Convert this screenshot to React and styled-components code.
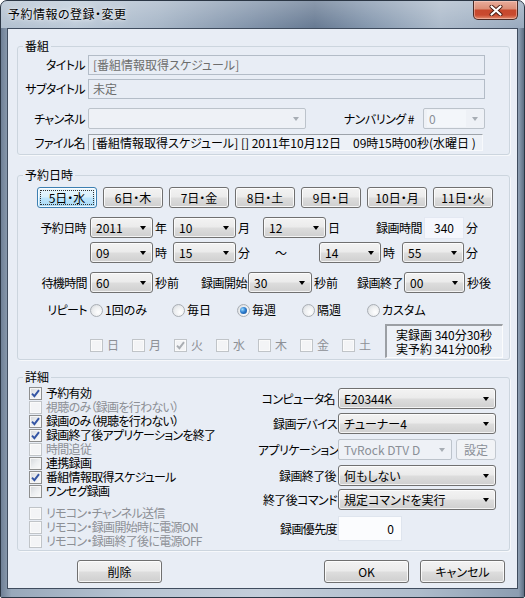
import React from 'react';
import styled, { createGlobalStyle } from 'styled-components';

const GlobalStyle = createGlobalStyle`
  html, body { margin: 0; padding: 0; background: #ffffff; }
  body {
    font-family: "Noto Sans CJK JP", "Noto Sans", sans-serif;
    font-size: 12px;
    line-height: 14px;
    font-feature-settings: "palt" 1;
    color: #000;
  }
  * { box-sizing: border-box; }
`;

const dayButtons = ['5日・水', '6日・木', '7日・金', '8日・土', '9日・日', '10日・月', '11日・火'];
const repeats = [
  { text: '1回のみ', w: 82 },
  { text: '毎日', w: 65 },
  { text: '毎週', w: 65, checked: true },
  { text: '隔週', w: 65 },
  { text: 'カスタム', w: 65 },
];
const weekDays = [
  { text: '日' },
  { text: '月' },
  { text: '火', checked: true },
  { text: '水' },
  { text: '木' },
  { text: '金' },
  { text: '土' },
];
const details = [
  { text: '予約有効', checked: true },
  { text: '視聴のみ（録画を行わない）', disabled: true },
  { text: '録画のみ（視聴を行わない）', checked: true },
  { text: '録画終了後アプリケーションを終了', checked: true },
  { text: '時間追従', disabled: true },
  { text: '連携録画' },
  { text: '番組情報取得スケジュール', checked: true },
  { text: 'ワンセグ録画' },
];
const remocon = ['リモコン・チャンネル送信', 'リモコン・録画開始時に電源ON', 'リモコン・録画終了後に電源OFF'];

function Check({ checked, disabled }) {
  return (
    <CheckBox $disabled={disabled}>
      {checked && (
        <svg width="9" height="9" viewBox="0 0 9 9">
          <path
            d="M1 4.6 L3.4 7.2 L8 1.2"
            fill="none"
            stroke={disabled ? '#a9adb2' : '#3455a4'}
            strokeWidth="1.9"
          />
        </svg>
      )}
    </CheckBox>
  );
}

function Combo({ value, w, disabled, field }) {
  return (
    <ComboBox $w={w} $disabled={disabled}>
      <ComboText $disabled={disabled} $field={field}>{value}</ComboText>
      <Arrow $disabled={disabled} />
    </ComboBox>
  );
}

const App = () => {
  return (
    <>
      <GlobalStyle />
      <Window>
        <TitleBar>
          <Title>予約情報の登録・変更</Title>
          <CloseButton>
            <svg width="14" height="11" viewBox="0 0 14 11">
              <path d="M2.5 1.5 L11.5 9.5 M11.5 1.5 L2.5 9.5" stroke="#4a1c12" strokeWidth="4" strokeLinecap="round" />
              <path d="M2.5 1.5 L11.5 9.5 M11.5 1.5 L2.5 9.5" stroke="#ffffff" strokeWidth="2.2" strokeLinecap="round" />
            </svg>
          </CloseButton>
        </TitleBar>
        <Frame>
          <Client>
            <Group $mt={10} $pb={3}>
              <Legend>番組</Legend>
              <Row $mt={2} $h={20}>
                <FieldLabel $w={70}>タイトル</FieldLabel>
                <TextBox $w={397}>[番組情報取得スケジュール]</TextBox>
              </Row>
              <Row $mt={4} $h={20}>
                <FieldLabel $w={70}>サブタイトル</FieldLabel>
                <TextBox $w={397}>未定</TextBox>
              </Row>
              <Row $mt={9}>
                <FieldLabel $w={70}>チャンネル</FieldLabel>
                <Combo w={218} value="" disabled />
                <SubLabel $w={117} $pr={9}>ナンバリング #</SubLabel>
                <Combo w={62} value="0" disabled field />
              </Row>
              <Row $mt={5} $h={17}>
                <FieldLabel $w={70}>ファイル名</FieldLabel>
                <FileBox>[番組情報取得スケジュール] [] 2011年10月12日　09時15時00秒(水曜日 )</FileBox>
              </Row>
            </Group>

            <Group $mt={13} $pb={1}>
              <Legend>予約日時</Legend>
              <DayRow>
                {dayButtons.map((d, i) => (
                  <DayButton key={d} $focused={i === 0}>{d}</DayButton>
                ))}
              </DayRow>
              <Row $mt={9}>
                <FieldLabel $w={72} $pr={4}>予約日時</FieldLabel>
                <Combo w={63} value="2011" />
                <Unit $w={20}>年</Unit>
                <Combo w={63} value="10" />
                <Unit $w={27}>月</Unit>
                <Combo w={63} value="12" />
                <Unit $w={14}>日</Unit>
                <SubLabel $w={84} $pr={2}>録画時間</SubLabel>
                <NumBox $w={40} $h={22} $pr={9}>340</NumBox>
                <Unit>分</Unit>
              </Row>
              <Row $mt={4}>
                <FieldLabel $w={72} />
                <Combo w={63} value="09" />
                <Unit $w={20}>時</Unit>
                <Combo w={63} value="15" />
                <Unit $w={27}>分</Unit>
                <Tilde>～</Tilde>
                <Combo w={62} value="14" />
                <Unit $w={21}>時</Unit>
                <Combo w={62} value="55" />
                <Unit>分</Unit>
              </Row>
              <Row $mt={9}>
                <FieldLabel $w={72}>待機時間</FieldLabel>
                <Combo w={63} value="60" />
                <Unit $w={30}>秒前</Unit>
                <SubLabel $w={65} $pr={1}>録画開始</SubLabel>
                <Combo w={64} value="30" />
                <Unit $w={30}>秒前</Unit>
                <SubLabel $w={62} $pr={1}>録画終了</SubLabel>
                <Combo w={61} value="00" />
                <Unit>秒後</Unit>
              </Row>
              <Row $mt={10} $h={14}>
                <FieldLabel $w={72}>リピート</FieldLabel>
                {repeats.map(r => (
                  <Option key={r.text} $w={r.w}>
                    <RadioDot $checked={r.checked} />
                    <span>{r.text}</span>
                  </Option>
                ))}
              </Row>
              <Row $mt={7} $h={34} $align="flex-start">
                <FieldLabel $w={72} />
                <WeekDays>
                  {weekDays.map(d => (
                    <DayCheck key={d.text}>
                      <Check checked={d.checked} disabled />
                      <span>{d.text}</span>
                    </DayCheck>
                  ))}
                </WeekDays>
                <ResultBox>
                  <ResultLine>実録画 340分30秒</ResultLine>
                  <ResultLine>実予約 341分00秒</ResultLine>
                </ResultBox>
              </Row>
            </Group>

            <Group $mt={10} $pb={2}>
              <Legend>詳細</Legend>
              <DetailColumns>
                <CheckColumn>
                  {details.map(d => (
                    <CheckRow key={d.text} $disabled={d.disabled}>
                      <Check checked={d.checked} disabled={d.disabled} />
                      <CheckText>{d.text}</CheckText>
                    </CheckRow>
                  ))}
                  <CheckGap />
                  {remocon.map(t => (
                    <CheckRow key={t} $disabled>
                      <Check disabled />
                      <CheckText>{t}</CheckText>
                    </CheckRow>
                  ))}
                </CheckColumn>
                <SettingColumn>
                  <Row $mt={4}>
                    <FieldLabel $w={80} $pr={3}>コンピュータ名</FieldLabel>
                    <Combo w={158} value="E20344K" />
                  </Row>
                  <Row $mt={4}>
                    <FieldLabel $w={80} $pr={1}>録画デバイス</FieldLabel>
                    <Combo w={158} value="チューナー4" />
                  </Row>
                  <Row $mt={5}>
                    <FieldLabel $w={80} $pr={0}>アプリケーション</FieldLabel>
                    <Combo w={114} value="TvRock DTV D" disabled />
                    <SmallButton>設定</SmallButton>
                  </Row>
                  <Row $mt={5}>
                    <FieldLabel $w={80} $pr={2}>録画終了後</FieldLabel>
                    <Combo w={158} value="何もしない" />
                  </Row>
                  <Row $mt={3}>
                    <FieldLabel $w={80} $pr={1}>終了後コマンド</FieldLabel>
                    <Combo w={158} value="規定コマンドを実行" />
                  </Row>
                  <Row $mt={6} $h={25}>
                    <FieldLabel $w={80} $pr={1}>録画優先度</FieldLabel>
                    <NumBox $w={64} $h={25} $pr={7} $white>0</NumBox>
                  </Row>
                </SettingColumn>
              </DetailColumns>
            </Group>

            <ButtonBar>
              <PushButton>削除</PushButton>
              <Spacer />
              <PushButton>OK</PushButton>
              <PushButton $ml={11}>キャンセル</PushButton>
            </ButtonBar>
          </Client>
        </Frame>
      </Window>
    </>
  );
};

const Window = styled.div`
  width: 525px;
  height: 598px;
  border: 1px solid #2b3644;
  border-radius: 7px 7px 2px 2px;
  overflow: hidden;
  display: flex;
  flex-direction: column;
  background: linear-gradient(
    90deg,
    #aebdcd 0%,
    #b9c7d6 14%,
    #a3b3c5 30%,
    #7a8da5 48%,
    #5f738d 60%,
    #7d91a9 70%,
    #a8b7c8 84%,
    #93a5ba 100%
  );
`;

const TitleBar = styled.div`
  height: 27px;
  flex: none;
  display: flex;
  align-items: flex-start;
  padding-left: 7px;
  background: linear-gradient(rgba(255, 255, 255, 0.28), rgba(255, 255, 255, 0.05));
`;

const Title = styled.div`
  margin-top: 6px;
  font-size: 12px;
  line-height: 14px;
  letter-spacing: 0.5px;
  color: #000;
  text-shadow: 0 0 6px rgba(255, 255, 255, 0.9), 0 0 2px rgba(255, 255, 255, 0.7);
`;

const CloseButton = styled.div`
  margin-left: auto;
  margin-right: 6px;
  width: 45px;
  height: 19px;
  display: flex;
  align-items: center;
  justify-content: center;
  border: 1px solid #4b2a24;
  border-top: none;
  border-radius: 0 0 5px 5px;
  background: linear-gradient(#e9ad9c 0%, #dc8f78 42%, #c7482c 52%, #c94a2f 78%, #e28d6f 100%);
  box-shadow: inset 0 0 0 1px rgba(255, 220, 210, 0.45);
`;

const Frame = styled.div`
  flex: 1;
  display: flex;
  padding: 0 6px 8px;
  background: linear-gradient(
    90deg,
    #6f8096 0%,
    #98a8ba 2%,
    #b7c4d2 25%,
    #c4ceda 50%,
    #aebccb 80%,
    #8c9db1 99%,
    #5f6f83 100%
  );
`;

const Client = styled.div`
  flex: 1;
  border: 1px solid #3f4c5e;
  background: #e8edf5;
  display: flex;
  flex-direction: column;
`;

const Group = styled.fieldset`
  margin: ${p => p.$mt}px 0 0 9px;
  width: 493px;
  min-width: 0;
  padding: 0 0 ${p => p.$pb}px 0;
  border: 1px solid #ccd5de;
  border-radius: 3px;
  box-shadow: 1px 1px 0 #f6f8fb;
`;

const Legend = styled.legend`
  margin-left: 5px;
  padding: 0 2px;
  line-height: 14px;
  height: 14px;
`;

const Row = styled.div`
  display: flex;
  align-items: ${p => p.$align || 'center'};
  height: ${p => p.$h || 21}px;
  margin-top: ${p => p.$mt || 0}px;
`;

const FieldLabel = styled.div`
  flex: none;
  width: ${p => p.$w}px;
  padding-right: ${p => (p.$pr === undefined ? 3 : p.$pr)}px;
  text-align: right;
  white-space: nowrap;
  letter-spacing: -0.6px;
`;

const SubLabel = styled.div`
  flex: none;
  width: ${p => p.$w}px;
  padding-right: ${p => p.$pr}px;
  text-align: right;
  white-space: nowrap;
  letter-spacing: -0.5px;
`;

const Unit = styled.div`
  flex: none;
  width: ${p => (p.$w ? `${p.$w}px` : 'auto')};
  padding-left: 2px;
  white-space: nowrap;
`;

const Tilde = styled.div`
  flex: none;
  width: 56px;
  padding-left: 12px;
`;

const TextBox = styled.div`
  width: ${p => p.$w}px;
  height: 20px;
  border: 1px solid #b3bcc7;
  padding: 2px 4px 0;
  color: #6d6d6d;
  white-space: nowrap;
`;

const FileBox = styled.div`
  width: 395px;
  height: 17px;
  padding: 1px 3px 0;
  border-top: 1px solid #9da3aa;
  border-left: 1px solid #9da3aa;
  border-right: 1px solid #f7f9fc;
  border-bottom: 1px solid #f7f9fc;
  background: #edf1f7;
  white-space: pre;
  overflow: hidden;
`;

const ComboBox = styled.div`
  flex: none;
  width: ${p => p.$w}px;
  height: 21px;
  display: flex;
  align-items: center;
  padding: 0 6px 0 3px;
  border: 1px solid ${p => (p.$disabled ? '#bcc3cb' : '#707070')};
  border-radius: ${p => (p.$disabled ? '2px' : '3px')};
  background: ${p =>
    p.$disabled
      ? '#eef1f6'
      : 'linear-gradient(#f3f3f3 0%, #ebebeb 48%, #dddddd 52%, #cfcfcf 100%)'};
  box-shadow: ${p => (p.$disabled ? 'none' : 'inset 0 0 0 1px rgba(255, 255, 255, 0.75)')};
`;

const ComboText = styled.div`
  flex: 1;
  height: 17px;
  padding: 2px 0 0 2px;
  margin-right: 6px;
  white-space: nowrap;
  overflow: hidden;
  color: ${p => (p.$disabled ? '#8a8f96' : '#000')};
  background: ${p => (p.$field ? '#f3f6fa' : 'transparent')};
`;

const Arrow = styled.span`
  flex: none;
  width: 0;
  height: 0;
  border-left: 3.5px solid transparent;
  border-right: 3.5px solid transparent;
  border-top: 4px solid ${p => (p.$disabled ? '#a7adb4' : '#000')};
`;

const DayRow = styled.div`
  display: flex;
  gap: 6px;
  padding-left: 19px;
  margin-top: 5px;
`;

const DayButton = styled.div`
  width: 60px;
  height: 21px;
  display: flex;
  align-items: center;
  justify-content: center;
  border: 1px solid ${p => (p.$focused ? '#3c7fb1' : '#707070')};
  border-radius: 3px;
  background: ${p =>
    p.$focused
      ? 'linear-gradient(#eaf6fd 0%, #d9f0fc 48%, #bee6fd 52%, #a7d9f5 100%)'
      : 'linear-gradient(#f3f3f3 0%, #ebebeb 48%, #dddddd 52%, #cfcfcf 100%)'};
  box-shadow: inset 0 0 0 1px rgba(255, 255, 255, 0.8);
  outline: ${p => (p.$focused ? '1px dotted #333' : 'none')};
  outline-offset: -4px;
`;

const NumBox = styled.div`
  flex: none;
  width: ${p => p.$w}px;
  height: ${p => p.$h}px;
  padding-right: ${p => p.$pr}px;
  display: flex;
  align-items: center;
  justify-content: flex-end;
  border: 1px solid ${p => (p.$white ? '#dfe5ee' : '#e3e8f2')};
  background: ${p => (p.$white ? '#fbfcfe' : '#f5f7fd')};
`;

const Option = styled.div`
  flex: none;
  width: ${p => p.$w}px;
  display: flex;
  align-items: center;
  gap: 2px;
`;

const RadioDot = styled.span`
  flex: none;
  width: 13px;
  height: 13px;
  border-radius: 50%;
  border: 1px solid #a9aeb4;
  background: radial-gradient(circle at 65% 65%, #ffffff 0%, #ebedef 55%, #cfd3d7 100%);
  display: flex;
  align-items: center;
  justify-content: center;

  &::after {
    content: '';
    width: 7px;
    height: 7px;
    border-radius: 50%;
    background: ${p =>
      p.$checked ? 'radial-gradient(circle at 35% 35%, #9bdcff 0%, #2f7fd0 45%, #11478f 100%)' : 'transparent'};
  }
`;

const CheckBox = styled.span`
  flex: none;
  width: 13px;
  height: 13px;
  display: flex;
  align-items: center;
  justify-content: center;
  border: 1px solid ${p => (p.$disabled ? '#c0c4c8' : '#8e8f8f')};
  background: ${p =>
    p.$disabled ? '#f3f4f6' : 'linear-gradient(135deg, #d3d6da 0%, #eceef0 50%, #fbfbfb 100%)'};
  box-shadow: inset 0 0 0 1px ${p => (p.$disabled ? '#fafafa' : '#f6f6f6')};
`;

const WeekDays = styled.div`
  display: flex;
  margin-top: 14px;
`;

const DayCheck = styled.div`
  flex: none;
  width: 42px;
  display: flex;
  align-items: center;
  gap: 4px;
  color: #8d9096;
`;

const ResultBox = styled.div`
  flex: none;
  width: 118px;
  height: 34px;
  margin-left: 1px;
  padding: 2px 0 0 9px;
  border-top: 2px solid #9b9fa4;
  border-left: 2px solid #9b9fa4;
  border-right: 1px solid #fbfcfd;
  border-bottom: 1px solid #fbfcfd;
  background: #edf1f7;
`;

const ResultLine = styled.div`
  height: 14px;
  line-height: 14px;
  white-space: nowrap;
`;

const DetailColumns = styled.div`
  display: flex;
`;

const CheckColumn = styled.div`
  width: 240px;
  padding: 2px 0 0 11px;
  display: flex;
  flex-direction: column;
`;

const CheckRow = styled.div`
  height: 14px;
  display: flex;
  align-items: center;
  gap: 4px;
  white-space: nowrap;
  color: ${p => (p.$disabled ? '#8d9096' : '#000')};
`;

const CheckText = styled.span`
  display: block;
  height: 14px;
  line-height: 14px;
  letter-spacing: -0.7px;
`;

const CheckGap = styled.div`
  height: 8px;
`;

const SettingColumn = styled.div`
  display: flex;
  flex-direction: column;
`;

const SmallButton = styled.div`
  flex: none;
  width: 40px;
  height: 21px;
  margin-left: 4px;
  display: flex;
  align-items: center;
  justify-content: center;
  border: 1px solid #c2c8cf;
  border-radius: 3px;
  background: #f1f3f6;
  color: #8a8f96;
`;

const ButtonBar = styled.div`
  display: flex;
  margin-top: 9px;
  padding: 0 12px 0 69px;
`;

const Spacer = styled.div`
  flex: 1;
`;

const PushButton = styled.div`
  flex: none;
  width: 85px;
  height: 23px;
  margin-left: ${p => p.$ml || 0}px;
  display: flex;
  align-items: center;
  justify-content: center;
  border: 1px solid #707070;
  border-radius: 3px;
  background: linear-gradient(#f3f3f3 0%, #ebebeb 48%, #dddddd 52%, #cfcfcf 100%);
  box-shadow: inset 0 0 0 1px rgba(255, 255, 255, 0.8);
`;

export default App;
